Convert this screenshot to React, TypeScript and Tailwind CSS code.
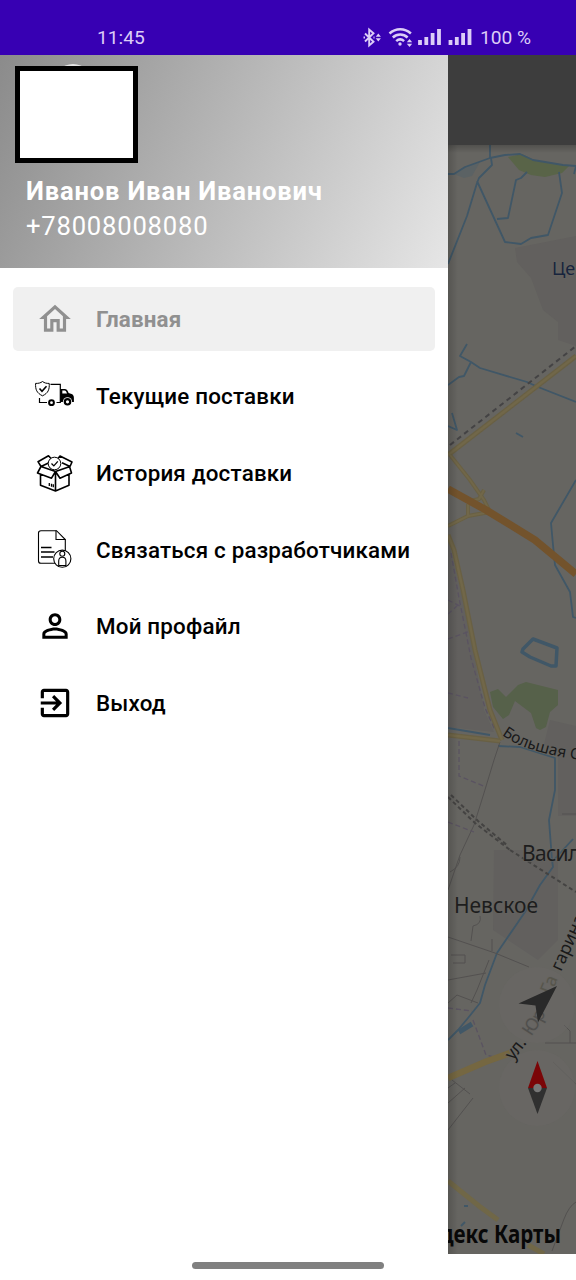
import type { ReactNode } from 'react';

function HomeIcon() {
  return (
    <svg viewBox="0 0 24 24" className="size-[38px]" fill="currentColor">
      <path d="M12 5.69l5 4.5V18h-2v-6H9v6H7v-7.81l5-4.5M12 3L2 12h3v8h6v-6h2v6h6v-8h3L12 3z" />
    </svg>
  );
}

function TruckIcon() {
  return (
    <svg viewBox="34 380 42 34" className="h-[34px] w-[42px]" fill="none" stroke="currentColor" strokeWidth="1">
      <path d="M42.500 382.500c2 1.500 4 2 6.700 1.900.4 6-.8 9.600-6.700 12.400-5.900-2.800-7.200-6.400-6.900-12.400 2.900.1 4.900-.4 6.900-1.900z" />
      <path d="M39.500 389.500l2.500 2.800 4.500-5" strokeWidth="1.600" />
      <path d="M50.500 385.300H60.300V403.500H56.500M39.500 399V403.500H47" strokeWidth="1.200" />
      <path d="M60.300 390h4.500c1.700 0 3 1.500 3.800 4l3 1c1.500.6 2.300 2 2.300 4v4h-2.300a4.200 4.200 0 0 0-8.200 0h-3.100z" fill="currentColor" stroke="none" />
      <path d="M62.300 391.500h2.400c1 0 1.700 1 2.300 2.900h-4.700z" fill="#fff" stroke="none" />
      <circle cx="51.500" cy="403.700" r="2.400" strokeWidth="2" />
      <circle cx="67.500" cy="402.800" r="4.600" fill="#fff" stroke="none" />
      <circle cx="67.500" cy="402.800" r="2.700" strokeWidth="2.200" />
    </svg>
  );
}

function BoxIcon() {
  return (
    <svg viewBox="35 452 40 40" className="size-[40px]" fill="none" stroke="currentColor" strokeWidth="1.600" strokeLinejoin="round">
      <path d="M41 465.500l14.500 5 14.500-5M40.500 473.500v10.800l15 5.700 13.500-5.700v-10.800M55.500 471v19M41 465.500l-3.500 6.500 14 5.200 4-6.700 4.500 6.700 11.500-5.200-2-6.500M41 465.500l-3-4.800 10.500-5.900 2.500 2.700M70 465.500l2-4.500-12-6-2 2.500M41 465.500l8-3.800M70 465.500l-8-3.800" />
      <circle cx="54.500" cy="462.500" r="6.300" fill="#fff" strokeWidth="1" />
      <path d="M51.500 462.500l2.300 2.400 4-4.500M49.300 482v3M51.500 482.700v3M53.300 483.300v3" strokeWidth="1.300" />
    </svg>
  );
}

function DocumentIcon() {
  return (
    <svg viewBox="37 528 38 42" className="h-[42px] w-[38px]" fill="none" stroke="currentColor" strokeWidth="1.100">
      <path d="M66.300 551v-11.500l-8.800-8.800H42c-1.500 0-2.500.9-2.500 2.300v28c0 1.500 1 2.300 2.500 2.300h14" />
      <path d="M57 530.500v9h9.500" />
      <path d="M42 547.500h10.500M42 552h13.500M42 557h12" strokeWidth="1.500" />
      <circle cx="63.300" cy="558.700" r="8.600" fill="#fff" />
      <circle cx="63.300" cy="553.700" r="2.500" />
      <path d="M59.700 565.500v-4.500c0-2.700 1.500-3.800 3.600-3.800s3.600 1.100 3.600 3.800v4.500z" />
    </svg>
  );
}

function PersonIcon() {
  return (
    <svg viewBox="0 0 24 24" className="size-[38px]" fill="currentColor">
      <path d="M12 5.900c1.160 0 2.100.94 2.100 2.100s-.94 2.100-2.100 2.100S9.900 9.160 9.900 8s.94-2.100 2.100-2.100m0 9c2.970 0 6.100 1.460 6.100 2.100v1.100H5.900V17c0-.64 3.130-2.100 6.100-2.100M12 4C9.790 4 8 5.790 8 8s1.790 4 4 4 4-1.790 4-4-1.790-4-4-4zm0 9c-2.670 0-8 1.340-8 4v3h16v-3c0-2.660-5.330-4-8-4z" />
    </svg>
  );
}

function ExitIcon() {
  return (
    <svg viewBox="0 0 24 24" className="size-[38px]" fill="currentColor">
      <path d="M10.090 15.590L11.500 17l5-5-5-5-1.410 1.410L12.670 11H3v2h9.670l-2.580 2.590zM19 3H5c-1.110 0-2 .9-2 2v4h2V5h14v14H5v-4H3v4c0 1.100.89 2 2 2h14c1.100 0 2-.9 2-2V5c0-1.100-.9-2-2-2z" />
    </svg>
  );
}

function StatusIcons() {
  return (
    <svg viewBox="363 25 114 24" className="h-6 w-[114px]" fill="none" stroke="#dccdf7" strokeWidth="1.900">
      <path d="M366 32.500l8.500 8.300-4.300 3.700V28.500l4.300 3.700-8.500 8.300M364.500 36.500h1.500M374.500 36.500h1" />
      <path d="M379.300 32.500l2.600 3.200h-5.200zM379.300 40.500l2.600-3.200h-5.200z" fill="#dccdf7" stroke="none" />
      <path d="M390.500 32.500c6.200-5.700 15.200-5.700 21.400 0M393.800 36.500c4.300-4 10.500-4 14.800 0M397.200 40.200c2.400-2.200 5.500-2.200 7.900 0" strokeWidth="2.500" />
      <circle cx="401" cy="43" r="1.700" fill="#dccdf7" stroke="none" />
      <path d="M410.500 38l2.700 3.200h-5.400zM410.500 46l2.700-3.200h-5.400z" fill="#dccdf7" stroke="none" />
      <path d="M421 44v-5M427.300 44v-8M433.600 44v-12M440 44v-16M451.500 44v-5M457.800 44v-8M464.100 44v-12M470.500 44v-16" strokeWidth="3.800" />
    </svg>
  );
}

function CityMap() {
  return (
    <svg viewBox="448 145 128 1109" className="block h-[1109px] w-32 bg-[#666561]" fill="none" fontFamily="'Noto Sans', sans-serif">
      <defs>
        <path id="bolshaya" d="M502 735Q527 754 590 761" />
        <path id="ul" d="M513 1061L534 1034" />
        <path id="yuriya" d="M531 1037Q545 1018 551 1001" />
        <path id="ga" d="M551 995L563 966" />
        <path id="garina" d="M561 972L590 908" />
        <linearGradient id="edge">
          <stop offset="0" stopColor="#000" stopOpacity=".16" />
          <stop offset="1" stopColor="#000" stopOpacity="0" />
        </linearGradient>
        <linearGradient id="top" x2="0" y2="1">
          <stop offset="0" stopColor="#000" stopOpacity=".2" />
          <stop offset="1" stopColor="#000" stopOpacity="0" />
        </linearGradient>
      </defs>

      <g fill="#62605e">
        <path d="M515 248l61-12v110l-18-6v-18l-15-12-12-32-14-16zM448 540l18 70 18 100 10 22-46-5zM550 720l26 6v90h-18v-60l-14-12zM494 850h64v90l-20 20-45-30z" />
      </g>
      <path d="M454 174l11-7 15-5-8 14-8 2z" fill="#5b6264" />
      <path d="M508 157l14-3 12 6 35 6-7 7-17 4-14-2-12-5z" fill="#596448" />
      <path d="M490 692l8-3 8 8 12-12 8-3 32 8v15l-8 7-4 15-6 3-4-2-5-15-16-12-6 14-6 4-10-12z" fill="#56614a" />

      <g stroke="#405767" strokeWidth="1.800" strokeLinejoin="round">
        <path d="M490 145v13M448 174h6l11-7 25-9 15-3 15-1 13 6 30 5 13 1M491 158l1 7-13 13-2 5-10 33-19 48M477 181l28 61 16 2 10-6 17-3 14-42-3-21M497 219l11-1 8-38 5-2 6-6M576 166l-2 8" />
        <path d="M467 344l-7 12 11 6 9 6 47 14 11 5 38 15M471 362l-7 14-5 1-11 8M452 413l5 17-9-4M516 433l7 4M576 480l-25 43 2 22 2 20 15 27 3 25 3 1" />
        <path d="M523 649l10-10 24 9-1 18h-5l-21-9-8-5z" strokeWidth="3.500" />
        <path d="M448 728l42 7M498 746l22 1 35 11v32l-6 30 3 40 1 7-13 18-15 27-28 41-12 32-5 18-12 15-10 12-10 10" />
        <path d="M552 862l21-23" />
        <path d="M459 1032l13-8" strokeWidth="5" />
        <path d="M464 1206h4M461 1226l4-4" />
      </g>

      <g stroke="#535150" strokeWidth="1">
        <path d="M500 742l-6 18-10 33-10 32-14 30-12 35M448 937l47 16 34 14M450 872q10-5 10-15M492 951v-12M480 916q2 8-7 10l-2 15M448 980l38-7M448 1003l9-8 21 8M489 960l-12 30-6 13M451 955h14v8h-12M452 1080l18 14M473 1098l-25 32M465 1088l-17 15M545 1043h31M570 1043v-12l-6-6M448 1088l7-5M576 1202q-7 4-12 17l-12 32M562 814h14" />
        <path d="M553 1062l23 22" opacity=".5" />
      </g>

      <g stroke="#5a5361" strokeWidth="1.300" strokeDasharray="5 3">
        <path d="M451 553l8 45 12 60 14 50 10 22M448 600l12 6M448 614l10-9M448 639l22-8M448 693l20 5M459 741v35l27 11M448 822l26 10M448 1008l24 3M473 1020l13 35 8 2" />
      </g>
      <path d="M448 797l27 26 35 27M451 795l27 26 30 25M510 850l66 42" stroke="#444342" strokeWidth="2" strokeDasharray="4 3" />

      <g stroke="#696044" strokeWidth="5">
        <path d="M448 455l128-99" />
        <path d="M450 455l20 25 14 20 6 12M484 490l-5 9-9 2M448 526l20-10 22-4M468 504v12" strokeWidth="4" />
        <path d="M448 535l6 15 9 40 12 60 15 60 12 30" />
        <path d="M448 735l52 6" />
      </g>
      <g stroke="#716749" strokeWidth="2.500">
        <path d="M448 455l128-99" />
        <path d="M450 455l20 25 14 20 6 12M484 490l-5 9-9 2M448 526l20-10 22-4M468 504v12" strokeWidth="2" />
        <path d="M448 535l6 15 9 40 12 60 15 60 12 30M448 735l52 6" />
      </g>
      <path d="M450 445l126-99" stroke="#444344" strokeWidth="2" strokeDasharray="5 4" />
      <path d="M448 489l38 21 49 30 41 34" stroke="#73532c" strokeWidth="7.500" />
      <path d="M448 1078l37-16 25-9" stroke="#756741" strokeWidth="6.500" />
      <path d="M448 1181l31 25 19 14M528 1245l16 9" stroke="#706747" strokeWidth="5" />

      <circle cx="537" cy="1005" r="38" fill="#6a6967" fillOpacity=".45" />
      <circle cx="537" cy="1088" r="38" fill="#6a6967" fillOpacity=".45" />

      <g stroke="#666561" strokeWidth="1.500" strokeOpacity=".7" paintOrder="stroke">
        <text x="552" y="275" fontSize="18" fill="#17243d">Центральный</text>
        <text x="522" y="861" fontSize="21" textLength="69" fill="#1d1d1d">Василь</text>
        <text x="454" y="913" fontSize="21" textLength="84" fill="#1d1d1d">Невское</text>
        <text fontSize="15.500" fill="#191919">
          <textPath href="#bolshaya">Большая С</textPath>
        </text>
        <g fontSize="17.500">
          <text fill="#191919"><textPath href="#ul">ул.</textPath></text>
          <text fill="#504f4d"><textPath href="#yuriya">Юр</textPath></text>
          <text fill="#57554c"><textPath href="#ga">Га</textPath></text>
          <text fill="#191919"><textPath href="#garina">гарина</textPath></text>
        </g>
      </g>

      <path d="M518.500 1003.500L557 986l-19 36.500-2.500-17z" fill="#292929" />
      <path d="M537.500 1061l-9.500 27h19z" fill="#7b0507" />
      <path d="M537.500 1114l-9.500-26h19z" fill="#303030" />
      <circle cx="537.500" cy="1088" r="4.200" fill="#777" />
      <text x="427" y="1243" fontSize="25" fontWeight="700" textLength="134" lengthAdjust="spacingAndGlyphs" fill="#080808">ндекс Карты</text>

      <path d="M448 145h10v1109h-10z" fill="url(#edge)" />
      <path d="M448 145h128v8H448z" fill="url(#top)" />
    </svg>
  );
}

type ItemProps = { icon: ReactNode; label: string; active?: boolean };

function MenuItem({ icon, label, active }: ItemProps) {
  return (
    <li className={`flex h-16 items-center rounded-[5px] ${active ? 'bg-[#f0f0f0] text-[#909090]' : 'text-black'}`}>
      <span className="ml-5 flex w-11 shrink-0 items-center justify-center">{icon}</span>
      <span className={`ml-[19px] pt-px text-[22.400px] leading-none whitespace-nowrap ${active ? 'font-bold tracking-[0.15px]' : 'font-medium tracking-[0.18px]'}`}>{label}</span>
    </li>
  );
}

export default function App() {
  return (
    <div className="flex h-[1280px] w-[576px] flex-col overflow-hidden bg-white font-['Roboto',sans-serif]">
      <header className="flex h-[55px] shrink-0 items-end bg-[#3700b3] pb-[5px] text-[19.200px] text-[#dccdf7]">
        <span className="ml-[97px] w-[265px] leading-6">11:45</span>
        <StatusIcons />
        <span className="ml-1 leading-6 whitespace-nowrap">100 %</span>
      </header>
      <div className="flex min-h-0 flex-1">
        <aside className="flex w-[448px] shrink-0 flex-col bg-white">
          <div className="relative h-[213px] shrink-0 bg-[linear-gradient(115deg,#8b8b8b_0%,#e6e6e6_100%)] pt-[11px] text-white">
            <div className="absolute top-[9px] left-[53px] h-10 w-10 rounded-full bg-[#e5e5e5]" />
            <div className="relative ml-[15px] h-[97px] w-[123px] border-[5px] border-black bg-white" />
            <p className="mt-[12px] ml-[26px] text-[25.600px] leading-8 font-bold tracking-[0.8px]">Иванов Иван Иванович</p>
            <p className="mt-[3px] ml-[26px] text-[25.600px] leading-8 tracking-[0.8px]">+78008008080</p>
          </div>
          <ul className="mt-[19px] ml-[13px] flex w-[422px] flex-col gap-[12.800px]">
            <MenuItem icon={<HomeIcon />} label="Главная" active />
            <MenuItem icon={<TruckIcon />} label="Текущие поставки" />
            <MenuItem icon={<BoxIcon />} label="История доставки" />
            <MenuItem icon={<DocumentIcon />} label="Связаться с разработчиками" />
            <MenuItem icon={<PersonIcon />} label="Мой профайл" />
            <MenuItem icon={<ExitIcon />} label="Выход" />
          </ul>
        </aside>
        <main className="flex w-32 flex-col">
          <div className="h-[90px] shrink-0 bg-[#3d3d3d]" />
          <CityMap />
        </main>
      </div>
      <div className="relative -mt-[18px] mb-[11px] ml-[192px] h-[7px] w-48 shrink-0 rounded-full bg-[#808080]" />
    </div>
  );
}
